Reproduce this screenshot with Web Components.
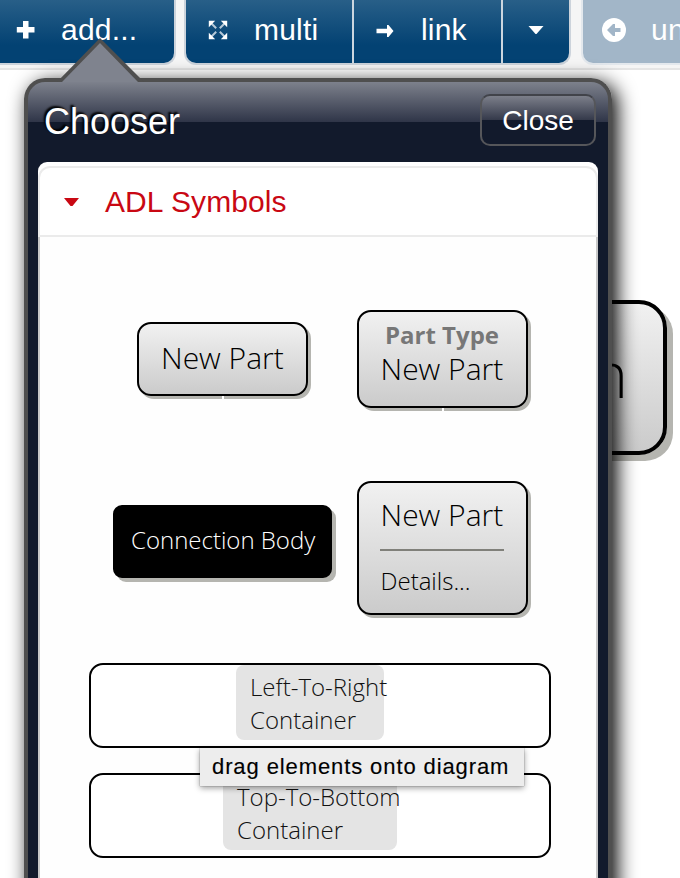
<!DOCTYPE html>
<html lang="en"><head><meta charset="utf-8"><title>Diagram editor</title>
<style>html,body{margin:0;width:680px;height:878px;overflow:hidden;background:#fff}</style></head>
<body><diagram-app></diagram-app>
<script>
function define(name, html){
  const t=document.createElement('template'); t.innerHTML=html;
  customElements.define(name, class extends HTMLElement{
    constructor(){super(); this.attachShadow({mode:'open'}).append(t.content.cloneNode(true));}
  });
}
define('tool-button', `<style>
:host{display:flex;align-items:center;box-sizing:border-box;height:63px;padding:0 0 4px 32px;color:#fff;font-size:30px;letter-spacing:.2px;white-space:nowrap;
 background:linear-gradient(#285f88,#034273 45px)}
:host(:not(:first-child)){border-left:2px solid #ccd6df}
:host([disabled]){background:#a2b6c8}
.icon{display:flex;width:36px;flex:none}
</style><span class="icon"><slot name="icon"></slot></span><slot></slot>`);
define('tool-group', `<style>
:host{display:flex;flex:none;box-sizing:border-box;height:65px;border:2px solid #ccd3db;border-top:0;border-radius:0 0 12px 12px;overflow:hidden}
:host([disabled]){border-color:#e3e8ed;margin-left:2px}
</style><slot></slot>`);
define('tool-bar', `<style>
:host{display:flex;gap:8px;box-sizing:border-box;height:70px;background:#f5f5f5;border-bottom:2px solid #e5e5e5;overflow:hidden}
.lead{margin-left:-16px}
.add{width:188px}.multi{width:166px}.link{width:149px}.more{width:68px}.undo{width:160px}
svg{display:block;flex:none}
tool-button.more{padding-left:24px}
</style>
<tool-group class="lead"><tool-button class="add" style="padding-left:30px"><svg slot="icon" width="20" height="20" viewBox="0 0 20 20"><path fill="#fff" d="M7 1h5.500v6H18.500v5.500H12.500v6H7v-6H.8V7H7z"/></svg><span style="margin-left:9px">add...</span></tool-button></tool-group>
<tool-group>
<tool-button class="multi" style="padding-left:22px"><svg slot="icon" width="20" height="20" viewBox="0 0 20 20"><g fill="#fff" stroke="#fff"><path stroke="none" d="M.8 .8h6.400L.8 7.200zM19.200 .8v6.400L12.800 .8zM.8 19.200v-6.400l6.400 6.400zM19.200 19.200h-6.400l6.400-6.400z"/><path stroke-width="2" stroke-opacity=".7" d="M3 3l5.200 5.200M17 3l-5.200 5.200M3 17l5.200-5.200M17 17l-5.200-5.200"/></g></svg><span style="margin-left:10px">multi</span></tool-button>
<tool-button class="link" style="padding-left:22px"><svg slot="icon" width="20" height="20" viewBox="0 0 20 20"><path fill="#fff" d="M.5 8.800h10.500V5h1.500l5 6-5 6h-1.500v-3.800H.5z"/></svg><span style="margin-left:9px">link</span></tool-button>
<tool-button class="more"><svg slot="icon" width="18" height="20" viewBox="0 0 18 20"><path fill="#fff" d="M1.500 6h15L9.500 14H8.500z"/></svg></tool-button>
</tool-group>
<tool-group disabled><tool-button disabled class="undo" style="padding-left:19px"><svg slot="icon" width="24" height="24" viewBox="0 0 24 24"><circle cx="12" cy="12" r="12" fill="#fff"/><path fill="#a2b6c8" d="M5 12l6-6h2v4h5.500v4H13v4h-2z"/></svg><span style="margin-left:13px">undo</span></tool-button></tool-group>`);
define('part-node', `<style>
:host{display:flex;flex-direction:column;position:relative;box-sizing:border-box;border:2px solid #000;border-radius:14px;background:linear-gradient(#f1f1f1,#cbcbcb);box-shadow:3px 3px 0 #b5b5b0;
font:300 30px/35px "Open Sans",sans-serif;color:#000;white-space:nowrap}
:host([tick])::after{content:"";position:absolute;left:83px;bottom:-5px;width:2px;height:3px;background:#fff}
</style><slot></slot>`);
define('flow-container', `<style>
:host{display:flex;justify-content:center;box-sizing:border-box;height:85px;border:2px solid #000;border-radius:14px;background:#fff;font:300 24px/33px "Open Sans",sans-serif;color:#111}
div{box-sizing:border-box;width:var(--w);height:75px;padding:5px 0 0 14px;background:#e4e4e4;border-radius:8px;white-space:nowrap}
</style><div><slot></slot></div>`);
define('symbol-palette', `<style>
:host{display:flex;flex-direction:column;flex:1;box-sizing:border-box;border:solid #c8c8c8;border-width:0 2px;background:#fefefe;padding:0 45px 0 49px}
.row{display:flex;align-items:center;gap:48.5px}
.r1{margin:73px 0 0 48px}.r2{margin:73px 0 48px 24px;gap:24.5px}
.p1{width:171px;height:74px}.p2{width:171px;height:98px}.p4{width:171px;height:134px}
.c{width:219px;height:73px;margin-bottom:14px;background:#000;color:#fff;border-radius:9px;box-shadow:4px 4px 0 #b5b5b0;font-size:24px}
.t{padding-left:22px}
b{font-size:24px;font-weight:700;color:#777;text-align:center;line-height:32px}
hr{width:124px;height:2px;border:0;background:#80807a;margin:17px 0 14px 21.500px}
flow-container+flow-container{margin-top:25px}
</style>
<div class="row r1"><part-node tick class="p1"><span class="t" style="padding-top:16px">New Part</span></part-node>
<part-node tick class="p2"><b style="padding-top:7px">Part Type</b><span class="t">New Part</span></part-node></div>
<div class="row r2"><part-node class="c"><span style="padding:15px 0 0 16px">Connection Body</span></part-node>
<part-node class="p4"><span class="t" style="padding-top:14px">New Part</span><hr><span class="t" style="font-size:24px;line-height:32px">Details...</span></part-node></div>
<flow-container style="--w:148px;padding-right:20px">Left-To-Right<br>Container</flow-container>
<flow-container style="--w:174px;padding-right:20px">Top-To-Bottom<br>Container</flow-container>`);
define('chooser-popup', `<style>
:host{display:flex;flex-direction:column;box-sizing:border-box;border:4px solid #4f4f4f;border-bottom:0;border-radius:21px 21px 0 0;background:linear-gradient(#7d818c,#2f3548 40px,#121a2c 40px);box-shadow:5px 5px 20px #000;padding:0 10px}
.arrow{position:absolute;left:29px;top:-45px}
header{display:flex;align-items:center;justify-content:space-between;height:80px;flex:none;padding:0 2px 0 6px;color:#fff}
h1{font-weight:400;font-size:36px;margin:0;text-shadow:-2px -2px 2px #000}
button{box-sizing:border-box;width:116px;height:52px;margin-top:-4px;border:2px solid #55565a;border-top-color:#41434a;border-radius:10px;background:linear-gradient(#7c7f8a,#34394a 24px,#121a2c 24px);color:#fff;font:28px "Liberation Sans",Arial,sans-serif;padding:2px 0 0 0}
main{display:flex;flex-direction:column;flex:1;background:#fff;border-radius:9px 9px 0 0;padding-top:4px}
.head{display:flex;align-items:center;flex:none;box-sizing:border-box;height:71px;border:2px solid #ebebeb;border-radius:12px 12px 0 0;padding-left:23px;color:#c90813;font-size:30px;letter-spacing:.1px}
.head svg{margin-right:24px}
</style>
<svg class="arrow" width="88" height="45" viewBox="0 0 88 45"><path d="M0 45L43 1 87 45z" fill="#4f4f4f"/><path d="M5 45L43 6 81 45z" fill="#7f838e"/></svg>
<header><h1>Chooser</h1><button>Close</button></header>
<main><div class="head"><svg width="18" height="10" viewBox="0 0 18 10"><path fill="#c90813" d="M1 1h15L9.500 9h-2z"/></svg><span>ADL Symbols</span></div><symbol-palette></symbol-palette></main>`);
define('diagram-app', `<style>
:host{display:flex;flex-direction:column;position:relative;width:680px;height:878px;overflow:hidden;background:#fff;font-family:"Liberation Sans",Arial,sans-serif}
.node{position:absolute;left:480px;top:300px;width:187px;height:155px;border-width:4px;border-radius:28px;box-shadow:6px 6px 0 #b5b5b0;font-size:64px;line-height:80px;align-items:flex-end;justify-content:center;padding:0 35px 8px 0}
chooser-popup{position:absolute;left:24px;top:78px;width:588px;height:820px}
.tip{position:absolute;left:200px;top:748px;width:324px;height:38px;box-sizing:border-box;padding-left:12px;background:#ededed;box-shadow:0 2px 6px #0006,0 0 1px #0008;font-size:22px;line-height:37px;letter-spacing:.9px;color:#000;white-space:nowrap;-webkit-text-stroke:.15px #000}
</style><tool-bar></tool-bar><part-node class="node">n</part-node><chooser-popup></chooser-popup><div class="tip">drag elements onto diagram</div>`);
</script></body></html>
